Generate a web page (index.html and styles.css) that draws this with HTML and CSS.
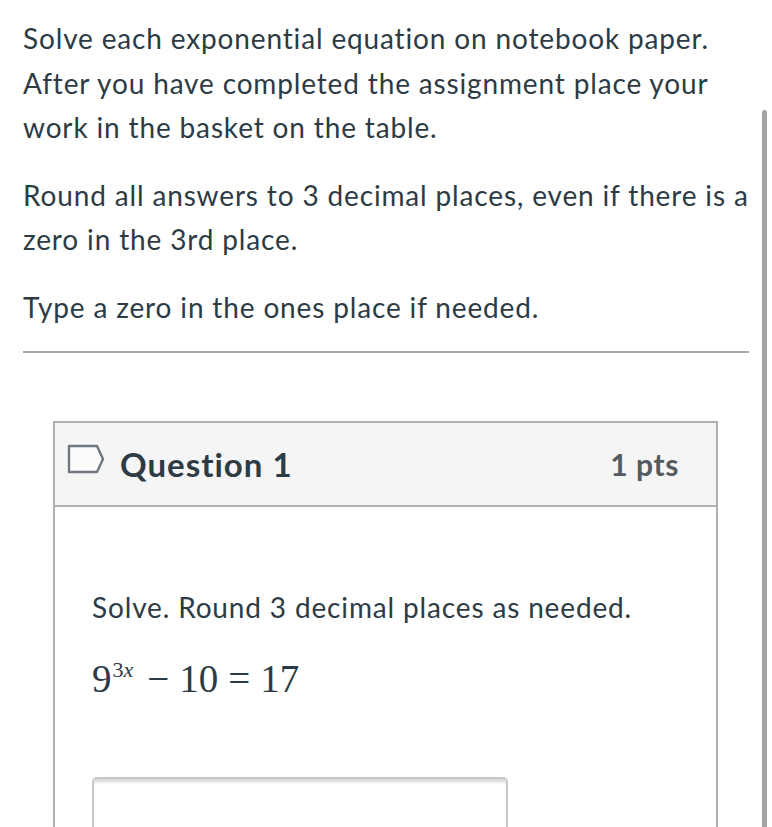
FILE: index.html
```html
<!DOCTYPE html>
<html>
<head>
<meta charset="utf-8">
<link rel="stylesheet" href="styles.css">
</head>
<body>
<div class="page">
  <div class="content">
    <p class="intro">Solve each exponential equation on notebook paper. After you have completed the assignment place your work in the basket on the table.</p>
    <p class="intro">Round all answers to 3 decimal places, even if there is a zero in the 3rd place.</p>
    <p class="intro">Type a zero in the ones place if needed.</p>
    <hr class="rule">
    <div class="question">
      <div class="q-header">
        <svg class="flag" width="38" height="30" viewBox="0 0 38 30">
          <path d="M2 2 H30 L36 15 L30 28 H2 Z" fill="#fbfbfb" stroke="#6f7780" stroke-width="2.4" stroke-linejoin="round"/>
        </svg>
        <span class="q-title">Question 1</span>
        <span class="q-pts">1 pts</span>
      </div>
      <div class="q-body">
        <p class="q-text">Solve. Round 3 decimal places as needed.</p>
        <p class="math"><span class="base">9</span><sup><span class="up">3</span><i>x</i></sup><span class="op">−</span>10<span class="rel">=</span>17</p>
        <div class="answer"></div>
      </div>
    </div>
  </div>
  <div class="scrollbar"></div>
</div>
</body>
</html>
```
FILE: styles.css
```css
html, body {
  margin: 0;
  padding: 0;
  background: #ffffff;
  overflow: hidden;
}
.page {
  display: flex;
  align-items: flex-start;
  height: 827px;
}
.content {
  width: 726px;
  margin-left: 23px;
  padding-top: 16px;
  font-family: Lato, "Open Sans", sans-serif;
  color: #2d3b45;
}
.intro {
  font-size: 28px;
  letter-spacing: 0.85px;
  line-height: 44.5px;
  margin: 0 0 23px 0;
}
.rule {
  border: 0;
  border-top: 2px solid #a8a8a8;
  margin: 0;
  margin-top: -1px;
}
.question {
  margin: 68px 31px 0 30px;
  border: 2px solid #b0b0b0;
  border-bottom: 0;
  height: 420px;
}
.q-header {
  display: flex;
  align-items: center;
  height: 82px;
  background: #f5f5f5;
  border-bottom: 2px solid #b0b0b0;
  padding: 0 37px 0 12px;
}
.flag {
  display: block;
  margin-top: -10px;
}
.q-title {
  font-weight: 700;
  font-size: 33px;
  letter-spacing: 1px;
  margin-left: 15px;
  flex: 1;
}
.q-pts {
  font-weight: 700;
  font-size: 30px;
  letter-spacing: 0.6px;
  color: #555b60;
}
.q-body {
  padding: 78px 37px 0 37px;
}
.q-text {
  font-size: 28px;
  letter-spacing: 0.85px;
  line-height: 44px;
  margin: 0;
}
.math {
  font-family: "Liberation Serif", "Times New Roman", serif;
  font-size: 39px;
  line-height: 44px;
  margin: 28px 0 0 0;
  color: #2d3b45;
}
.math sup {
  font-size: 22px;
  vertical-align: 0;
  position: relative;
  top: -15px;
  margin-left: 1px;
}
.op {
  margin: 0 10px 0 14px;
}
.rel {
  margin: 0 10px;
}
.answer {
  width: 412px;
  height: 60px;
  margin-top: 70px;
  border: 2px solid #c8c8c8;
  border-radius: 5px;
  box-shadow: inset 0 4px 3px -1px #d8d8d8;
}
.scrollbar {
  width: 5px;
  height: 717px;
  margin-top: 110px;
  margin-left: 13px;
  background: #a4a4a4;
  border-radius: 3px 3px 0 0;
}
```
